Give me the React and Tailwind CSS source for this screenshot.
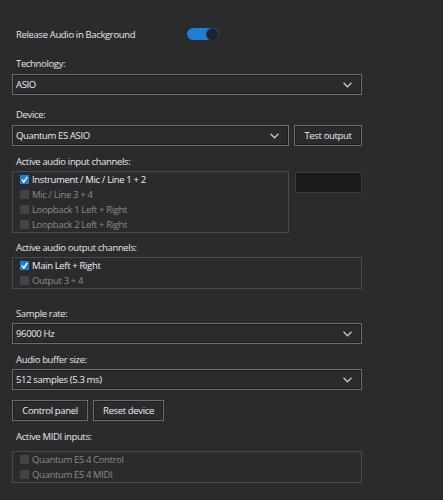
import React from "react";

const font = { fontFamily: '"Open Sans", Roboto, sans-serif' };

function Chevron() {
  return (
    <svg width="9" height="6" viewBox="0 0 9 6" className="shrink-0">
      <path d="M0.5 0.8 L4.5 4.8 L8.5 0.8" fill="none" stroke="#c8c8c8" strokeWidth="1.3" />
    </svg>
  );
}

function Select({ value, className = "" }) {
  return (
    <div
      className={`h-[21px] flex items-center justify-between pl-[3px] pr-[9px] border border-[#6c6c6c] shadow-[inset_0_0_0_1px_#1f1f21] bg-[#2b2b2e] text-[#ececec] ${className}`}
    >
      <span>{value}</span>
      <Chevron />
    </div>
  );
}

function Button({ children, className = "" }) {
  return (
    <div
      className={`h-[21px] flex items-center justify-center border border-[#6c6c6c] shadow-[inset_0_0_0_1px_#1f1f21] text-[#ececec] ${className}`}
    >
      {children}
    </div>
  );
}

function Check({ checked, label }) {
  return (
    <div className="h-[15px] flex items-center pl-[7px] gap-[3px]">
      {checked ? (
        <svg width="9" height="9" viewBox="0 0 9 9" className="shrink-0">
          <rect width="9" height="9" fill="#1c7fd6" />
          <path d="M1.8 4.5 L3.8 6.9 L7.3 1.8" fill="none" stroke="#ffffff" strokeWidth="1.5" />
        </svg>
      ) : (
        <span className="w-[9px] h-[9px] shrink-0 bg-[#444446]" />
      )}
      <span className={checked ? "text-[#f0f0f0]" : "text-[#8a8a8c]"}>{label}</span>
    </div>
  );
}

function Label({ children, className = "" }) {
  return <div className={`h-[14px] leading-[14px] pl-[4px] text-[#e6e6e6] ${className}`}>{children}</div>;
}

function List({ children, className = "" }) {
  return <div className={`border border-[#4a4a4c] ${className}`}>{children}</div>;
}

export default function App() {
  return (
    <div className="w-[443px] h-[500px] bg-[#2b2b2e] text-[9.5px] leading-[14px] tracking-[-0.35px] overflow-hidden" style={font}>
      <div className="w-[350px] ml-[12px] pt-[28px]">
        <div className="h-[12px] flex items-center pl-[4px]">
          <span className="w-[171px] pt-px text-[#e6e6e6]">Release Audio in Background</span>
          <div className="w-[32px] h-[12px] rounded-full bg-[#1f7dd8] flex items-center justify-end">
            <span className="w-[13px] h-[13px] rounded-full bg-[#1c222b] border border-[#2a3340]" />
          </div>
        </div>

        <Label className="mt-[17px]">Technology:</Label>
        <Select value="ASIO" className="mt-[3px]" />

        <Label className="mt-[13px]">Device:</Label>
        <div className="mt-[3px] flex gap-[5px]">
          <Select value="Quantum ES ASIO" className="w-[277px]" />
          <Button className="flex-1">Test output</Button>
        </div>

        <Label className="mt-[9px]">Active audio input channels:</Label>
        <div className="mt-[2px] flex gap-[6px] items-start">
          <List className="w-[277px]">
            <Check checked label="Instrument / Mic / Line 1 + 2" />
            <Check label="Mic / Line 3 + 4" />
            <Check label="Loopback 1 Left + Right" />
            <Check label="Loopback 2 Left + Right" />
          </List>
          <div className="mt-[1px] flex-1 h-[21px] bg-[#1a1a1a] border border-[#3c3c3e]" />
        </div>

        <Label className="mt-[8px]">Active audio output channels:</Label>
        <List className="mt-[2px]">
          <Check checked label="Main Left + Right" />
          <Check label="Output 3 + 4" />
        </List>

        <Label className="mt-[18px]">Sample rate:</Label>
        <Select value="96000 Hz" className="mt-[2px]" />

        <Label className="mt-[9px]">Audio buffer size:</Label>
        <Select value="512 samples (5.3 ms)" className="mt-[2px]" />

        <div className="mt-[10px] flex gap-[5px]">
          <Button className="w-[76px]">Control panel</Button>
          <Button className="w-[71px]">Reset device</Button>
        </div>

        <Label className="mt-[9px]">Active MIDI inputs:</Label>
        <List className="mt-[7px]">
          <Check label="Quantum ES 4 Control" />
          <Check label="Quantum ES 4 MIDI" />
        </List>
      </div>
    </div>
  );
}
